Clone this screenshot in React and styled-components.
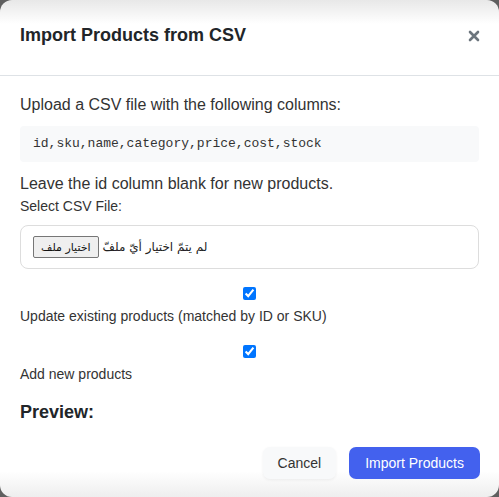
import styled, { createGlobalStyle } from "styled-components";

const Global = createGlobalStyle`
  html, body {
    margin: 0;
    padding: 0;
    background: #5f5f5f;
  }
  * { box-sizing: border-box; }
`

const Modal = styled.div`
  width: 499px;
  height: 497px;
  border-radius: 12px;
  overflow: hidden;
  font-family: "Liberation Sans", Arial, sans-serif;
  color: #333;
  background: linear-gradient(to bottom, #e8e8e8 0, #ffffff 24px, #ffffff calc(100% - 26px), #eeeeee 100%);
  display: flex;
  flex-direction: column;
`

const Header = styled.div`
  height: 76px;
  padding: 0 20px 4px 20px;
  display: flex;
  align-items: center;
  justify-content: space-between;
  border-bottom: 1px solid #dee2e6;
`

const Title = styled.h2`
  margin: 0;
  font-size: 18px;
  font-weight: 700;
  color: #212529;
`

const Close = styled.button`
  border: none;
  background: none;
  padding: 0;
  width: 12px;
  height: 20px;
  margin-right: -1px;
  display: flex;
  align-items: center;
  justify-content: center;
  cursor: pointer;
`

const Body = styled.div`
  padding: 19px 20px 0 20px;
  display: flex;
  flex-direction: column;
`

const Text = styled.p`
  margin: 0;
  font-size: ${p => p.size || 16}px;
  line-height: ${p => p.lh || 19}px;
  color: #333;
`

const Code = styled.pre`
  margin: 12px 0 12px 0;
  padding: 10px 13px;
  background: #f8f9fa;
  border-radius: 4px;
  font-family: "Liberation Mono", "Courier New", monospace;
  font-size: 13px;
  line-height: 16px;
  color: #333;
`

const FileBox = styled.div`
  margin-top: 10px;
  height: 44px;
  border: 1px solid #dddddd;
  border-radius: 8px;
  padding: 0 12px;
  display: flex;
  align-items: center;
  gap: 4px;
  font-family: "DejaVu Sans", "Liberation Sans", sans-serif;
  font-size: 12px;
  color: #222;
`

const FileButton = styled.span`
  display: inline-flex;
  align-items: center;
  height: 22px;
  padding: 0 7px;
  background: #efefef;
  border: 1px solid #767676;
  border-radius: 2px;
  font-size: 11px;
  color: #111;
`

const Check = styled.input`
  display: block;
  width: 100%;
  height: 13px;
  margin: ${p => p.top}px 0 8px 0;
`

const CheckLabel = styled.label`
  display: block;
  font-size: 14px;
  line-height: 17px;
  color: #333;
`

const Preview = styled.h3`
  margin: 19px 0 0 0;
  font-size: 18px;
  line-height: 21px;
  font-weight: 700;
  color: #212529;
`

const Footer = styled.div`
  margin-top: auto;
  padding: 0 19px 18px 20px;
  display: flex;
  justify-content: flex-end;
  gap: 13px;
`

const Button = styled.button`
  height: 32px;
  padding: 0 ${p => (p.primary ? 16 : 15)}px;
  border: none;
  border-radius: 7px;
  font-family: "Liberation Sans", Arial, sans-serif;
  font-size: 14px;
  cursor: pointer;
  background: ${p => (p.primary ? "#4361ee" : "#f8f9fa")};
  color: ${p => (p.primary ? "#ffffff" : "#333333")};
  box-shadow: ${p => (p.primary ? "none" : "0 1px 3px rgba(0,0,0,0.06)")};
`

function App() {
  return (
    <>
      <Global />
      <Modal>
        <Header>
          <Title>Import Products from CSV</Title>
          <Close aria-label="close">
            <svg width="12" height="12" viewBox="0 0 12 12">
              <path d="M2 2 L10 10 M10 2 L2 10" stroke="#6c757d" strokeWidth="2.6" strokeLinecap="round" />
            </svg>
          </Close>
        </Header>
        <Body>
          <Text>Upload a CSV file with the following columns:</Text>
          <Code>id,sku,name,category,price,cost,stock</Code>
          <Text>Leave the id column blank for new products.</Text>
          <Text size={14} lh={17} style={{ marginTop: 5 }}>Select CSV File:</Text>
          <FileBox>
            <FileButton>اختيار ملف</FileButton>
            <span>لم يتمّ اختيار أيّ ملفّ</span>
          </FileBox>
          <Check type="checkbox" defaultChecked top={18} />
          <CheckLabel>Update existing products (matched by ID or SKU)</CheckLabel>
          <Check type="checkbox" defaultChecked top={20} />
          <CheckLabel>Add new products</CheckLabel>
          <Preview>Preview:</Preview>
        </Body>
        <Footer>
          <Button>Cancel</Button>
          <Button primary>Import Products</Button>
        </Footer>
      </Modal>
    </>
  );
}

export default App;
